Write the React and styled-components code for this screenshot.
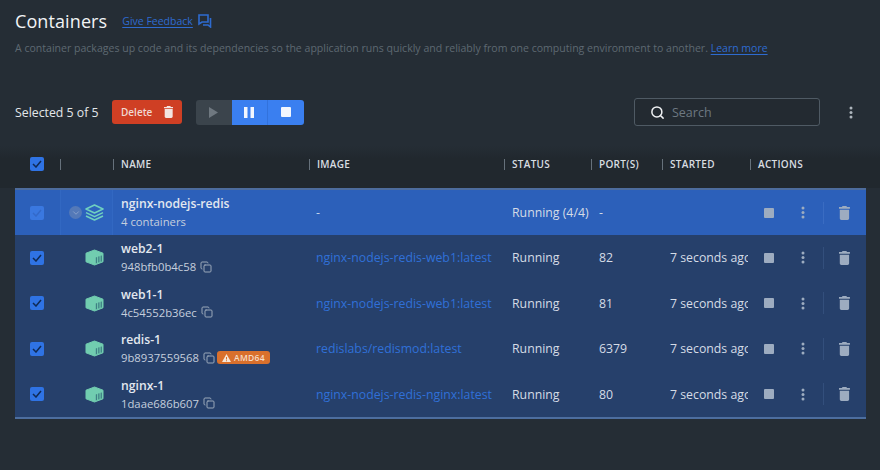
import React from 'react';
import styled, { createGlobalStyle } from 'styled-components';
import { Search, Copy, ChevronDown } from 'lucide-react';

const GlobalStyle = createGlobalStyle`
  html, body {
    margin: 0;
    background: #252d35;
    font-family: "Open Sans", "Liberation Sans", sans-serif;
  }
`;

const COLUMNS = '45px 53px 196px 195px 87px 71px 88px 116px';

const Page = styled.div`
  width: 880px;
  height: 470px;
  overflow: hidden;
  box-sizing: border-box;
  padding-top: 10px;
`;

const TitleRow = styled.div`
  display: flex;
  align-items: center;
  height: 22px;
  padding-left: 15px;
`;

const Title = styled.h1`
  margin: 0 15px 0 0;
  font-size: 18px;
  font-weight: 400;
  letter-spacing: 0.1px;
  color: #f2f4f5;
`;

const Link = styled.a`
  color: #2e6bd0;
  font-size: 10.5px;
  text-decoration: underline;
  text-underline-offset: 2px;
  text-decoration-thickness: 1px;
`;

const FeedbackIcon = styled.svg`
  margin-left: 5px;
`;

const Description = styled.p`
  margin: 8px 0 0;
  padding-left: 15px;
  font-size: 10.55px;
  line-height: 16px;
  color: #5e6972;
`;

const Toolbar = styled.div`
  display: flex;
  align-items: center;
  height: 28px;
  margin-top: 42px;
  padding-left: 15px;
`;

const SelectedText = styled.span`
  width: 97px;
  font-size: 12.3px;
  color: #e3e7ea;
`;

const DeleteButton = styled.button`
  display: flex;
  align-items: center;
  justify-content: space-between;
  box-sizing: border-box;
  width: 70px;
  height: 24px;
  padding: 0 9px;
  border: none;
  border-radius: 3px;
  background: #cf3f24;
  color: #f0d9d3;
  font: 600 10px "Open Sans", sans-serif;
`;

const ButtonGroup = styled.div`
  display: flex;
  height: 25px;
  margin-left: 14px;
  border-radius: 3px;
  overflow: hidden;
`;

const GroupButton = styled.div`
  display: flex;
  align-items: center;
  justify-content: center;
  width: 35.5px;
  background: ${(p) => (p.$disabled ? '#3b444c' : '#3a7ff0')};
  border-left: ${(p) => (p.$divided ? '1px solid #3272dc' : 'none')};
`;

const SearchBox = styled.div`
  display: flex;
  align-items: center;
  box-sizing: border-box;
  width: 186px;
  height: 28px;
  margin-left: auto;
  padding-left: 15px;
  border: 1px solid #4f5a64;
  border-radius: 3px;
  background: #232a31;
  color: #6d7881;
  font-size: 12.5px;
`;

const SearchIcon = styled(Search)`
  margin-right: 7px;
  color: #f0f2f4;
`;

const ToolbarMenu = styled.div`
  display: flex;
  margin: 0 27px 0 29px;
`;

const HeaderRow = styled.div`
  display: grid;
  grid-template-columns: ${COLUMNS};
  align-items: center;
  box-sizing: border-box;
  height: 42px;
  margin-top: 20px;
  padding: 0 0 6px 15px;
  background: linear-gradient(#252d35, #21282e 30%);
`;

const HeaderCell = styled.div`
  height: 11px;
  display: flex;
  align-items: center;
  padding-left: 7px;
  border-left: 1px solid #66717b;
  font-size: 10px;
  font-weight: 600;
  letter-spacing: 0.3px;
  color: #d8dde1;
`;

const CheckCell = styled.div`
  display: flex;
  padding-left: 15px;
`;

const Checkbox = styled.div`
  display: flex;
  align-items: center;
  justify-content: center;
  width: 14px;
  height: 14px;
  border-radius: 2px;
  background: ${(p) => (p.$faded ? '#3a78e0' : '#2f73e4')};
`;

const Table = styled.div`
  width: 851px;
  margin-left: 15px;
  border-top: 2px solid #4d6c9d;
  border-bottom: 2px solid #4d6e9f;
  box-sizing: border-box;
`;

const Row = styled.div`
  display: grid;
  grid-template-columns: ${COLUMNS};
  align-items: center;
  height: ${(p) => (p.$group ? '45px' : '45.5px')};
  background: ${(p) => (p.$group ? '#2c60ba' : '#26406b')};
  color: #d5dce6;
  font-size: 12.3px;
`;

const IconCell = styled.div`
  display: flex;
  align-items: center;
  justify-content: flex-end;
  height: 100%;
  padding-right: 9px;
  box-sizing: border-box;
  gap: 3px;
  ${(p) => p.$group && `
    background: #2d62bd;
    box-shadow: inset 1px 0 #3268c2, inset -1px 0 #3268c2;
  `}
`;

const ExpandCircle = styled.div`
  display: flex;
  align-items: center;
  justify-content: center;
  width: 13px;
  height: 13px;
  border-radius: 50%;
  background: #5479b8;
  color: #8fa6cd;
`;

const NameCell = styled.div`
  padding-left: 8px;
`;

const Name = styled.div`
  font-size: 12.2px;
  font-weight: 600;
  line-height: 17px;
  color: #e3e8ef;
`;

const SubLine = styled.div`
  display: flex;
  align-items: center;
  margin-top: 1px;
  font-size: 11.3px;
  line-height: 17px;
  color: #c5cfdd;
`;

const CopyIcon = styled(Copy)`
  margin-left: 4px;
  color: #9aa8ba;
`;

const ArchBadge = styled.span`
  display: flex;
  align-items: center;
  gap: 3px;
  height: 13px;
  margin-left: 2px;
  padding: 0 5px;
  border-radius: 3px;
  background: #d9702c;
  color: #f6dcc6;
  font-size: 8.5px;
  font-weight: 600;
  letter-spacing: 0.3px;
`;

const ImageCell = styled.div`
  padding-left: 7px;
  color: ${(p) => (p.$link ? '#3070d8' : '#c5d3ea')};
`;

const TextCell = styled.div`
  margin-right: 2px;
  padding-left: 8px;
  white-space: nowrap;
  overflow: hidden;
`;

const Actions = styled.div`
  display: flex;
  align-items: center;
  height: 100%;
  padding-left: 14px;
  color: #9dacc0;
`;

const StopIcon = styled.div`
  width: 10px;
  height: 10px;
  border-radius: 1px;
  background: #9dacc0;
`;

const ActionDots = styled.div`
  display: flex;
  justify-content: center;
  width: 12px;
  margin-left: 23px;
`;

const ActionDivider = styled.div`
  width: 1px;
  height: 22px;
  margin: 0 15px 0 14px;
  background: ${(p) => (p.$group ? '#3a6cc2' : '#334f7c')};
`;

const Dots = ({ color = '#9dacc0' }) => (
  <svg width="4" height="13" viewBox="0 0 4 13" fill={color}>
    <circle cx="2" cy="2" r="1.5" />
    <circle cx="2" cy="6.5" r="1.5" />
    <circle cx="2" cy="11" r="1.5" />
  </svg>
);

const Trash = ({ color = '#9dacc0', size = 14 }) => (
  <svg width={size * 0.78} height={size} viewBox="0 0 11 14" fill={color}>
    <path d="M3.6 0h3.8l.7 1H11v1.6H0V1h2.9zM.8 3.6h9.4V12.4c0 .9-.7 1.6-1.6 1.6H2.4c-.9 0-1.6-.7-1.6-1.6z" />
  </svg>
);

const Tick = ({ color = '#0f2a55' }) => (
  <svg width="10" height="8" viewBox="0 0 10 8" fill="none" stroke={color} strokeWidth="1.5">
    <path d="M1 4l3 3 5-6" />
  </svg>
);

const ContainerIcon = () => (
  <svg width="19" height="17" viewBox="0 0 19 17">
    <path fill="#71cdb0" stroke="#71cdb0" strokeLinejoin="round" d="M9.5 1L18 4.2V12.8L9.5 16L1 12.8V4.2z" />
    <path fill="#3f7f84" d="M10.8 8.4l1.3-.4v6l-1.3.4zM13.2 7.6l1.3-.4v6l-1.3.4zM15.6 6.8l1.3-.4v6l-1.3.4z" />
  </svg>
);

const StackIcon = () => (
  <svg width="19" height="17" viewBox="0 0 19 17" fill="none" stroke="#6fd0c0" strokeWidth="1.6" strokeLinejoin="round">
    <path d="M9.5 1L18 5 9.5 9 1 5z" />
    <path d="M1 8.6l8.5 4L18 8.6" />
    <path d="M1 12l8.5 4L18 12" />
  </svg>
);

const WarningIcon = () => (
  <svg width="9" height="8" viewBox="0 0 9 8" fill="#f6e6d8">
    <path d="M4.5 0L9 8H0zM4 3v2.6h1V3zM4 6.2v1h1v-1z" fillRule="evenodd" />
  </svg>
);

const containers = [
  { name: 'web2-1', id: '948bfb0b4c58', image: 'nginx-nodejs-redis-web1:latest', port: '82' },
  { name: 'web1-1', id: '4c54552b36ec', image: 'nginx-nodejs-redis-web1:latest', port: '81' },
  { name: 'redis-1', id: '9b8937559568', image: 'redislabs/redismod:latest', port: '6379', arch: 'AMD64' },
  { name: 'nginx-1', id: '1daae686b607', image: 'nginx-nodejs-redis-nginx:latest', port: '80' },
];

const RowActions = ({ group }) => (
  <Actions>
    <StopIcon />
    <ActionDots>
      <Dots />
    </ActionDots>
    <ActionDivider $group={group} />
    <Trash />
  </Actions>
);

export default function App() {
  return (
    <Page>
      <GlobalStyle />
      <TitleRow>
        <Title>Containers</Title>
        <Link>Give Feedback</Link>
        <FeedbackIcon width="14" height="14" viewBox="0 0 14 14" fill="none" stroke="#2e6bd0" strokeWidth="1.6">
          <path d="M1 1h9v7H4L1 10z" />
          <path d="M12.5 4v9l-2.5-2H5" />
        </FeedbackIcon>
      </TitleRow>
      <Description>
        A container packages up code and its dependencies so the application runs quickly and reliably from one computing environment to another. <Link>Learn more</Link>
      </Description>

      <Toolbar>
        <SelectedText>Selected 5 of 5</SelectedText>
        <DeleteButton>
          Delete
          <Trash color="#f3e4e0" size={12} />
        </DeleteButton>
        <ButtonGroup>
          <GroupButton $disabled>
            <svg width="9" height="11" viewBox="0 0 9 11" fill="#6f7880">
              <path d="M0 0l9 5.5L0 11z" />
            </svg>
          </GroupButton>
          <GroupButton>
            <svg width="10" height="11" viewBox="0 0 10 11" fill="#f2f6fe">
              <path d="M0 0h3.5v11H0zM6.5 0H10v11H6.5z" />
            </svg>
          </GroupButton>
          <GroupButton $divided>
            <svg width="10" height="10" viewBox="0 0 10 10" fill="#f2f6fe">
              <rect width="10" height="10" rx="1" />
            </svg>
          </GroupButton>
        </ButtonGroup>
        <SearchBox>
          <SearchIcon size={15} strokeWidth={2.4} />
          Search
        </SearchBox>
        <ToolbarMenu>
          <Dots color="#aeb6bd" />
        </ToolbarMenu>
      </Toolbar>

      <HeaderRow>
        <CheckCell>
          <Checkbox>
            <Tick />
          </Checkbox>
        </CheckCell>
        <HeaderCell />
        <HeaderCell>NAME</HeaderCell>
        <HeaderCell>IMAGE</HeaderCell>
        <HeaderCell>STATUS</HeaderCell>
        <HeaderCell>PORT(S)</HeaderCell>
        <HeaderCell>STARTED</HeaderCell>
        <HeaderCell>ACTIONS</HeaderCell>
      </HeaderRow>

      <Table>
        <Row $group>
          <CheckCell>
            <Checkbox $faded>
              <Tick color="#3369c9" />
            </Checkbox>
          </CheckCell>
          <IconCell $group>
            <ExpandCircle>
              <ChevronDown size={10} />
            </ExpandCircle>
            <StackIcon />
          </IconCell>
          <NameCell>
            <Name>nginx-nodejs-redis</Name>
            <SubLine>4 containers</SubLine>
          </NameCell>
          <ImageCell>-</ImageCell>
          <TextCell>Running (4/4)</TextCell>
          <TextCell>-</TextCell>
          <TextCell />
          <RowActions group />
        </Row>
        {containers.map((c) => (
          <Row key={c.name}>
            <CheckCell>
              <Checkbox>
                <Tick />
              </Checkbox>
            </CheckCell>
            <IconCell>
              <ContainerIcon />
            </IconCell>
            <NameCell>
              <Name>{c.name}</Name>
              <SubLine>
                {c.id}
                <CopyIcon size={12} />
                {c.arch && (
                  <ArchBadge>
                    <WarningIcon />
                    {c.arch}
                  </ArchBadge>
                )}
              </SubLine>
            </NameCell>
            <ImageCell $link>{c.image}</ImageCell>
            <TextCell>Running</TextCell>
            <TextCell>{c.port}</TextCell>
            <TextCell>7 seconds ago</TextCell>
            <RowActions />
          </Row>
        ))}
      </Table>
    </Page>
  );
}
